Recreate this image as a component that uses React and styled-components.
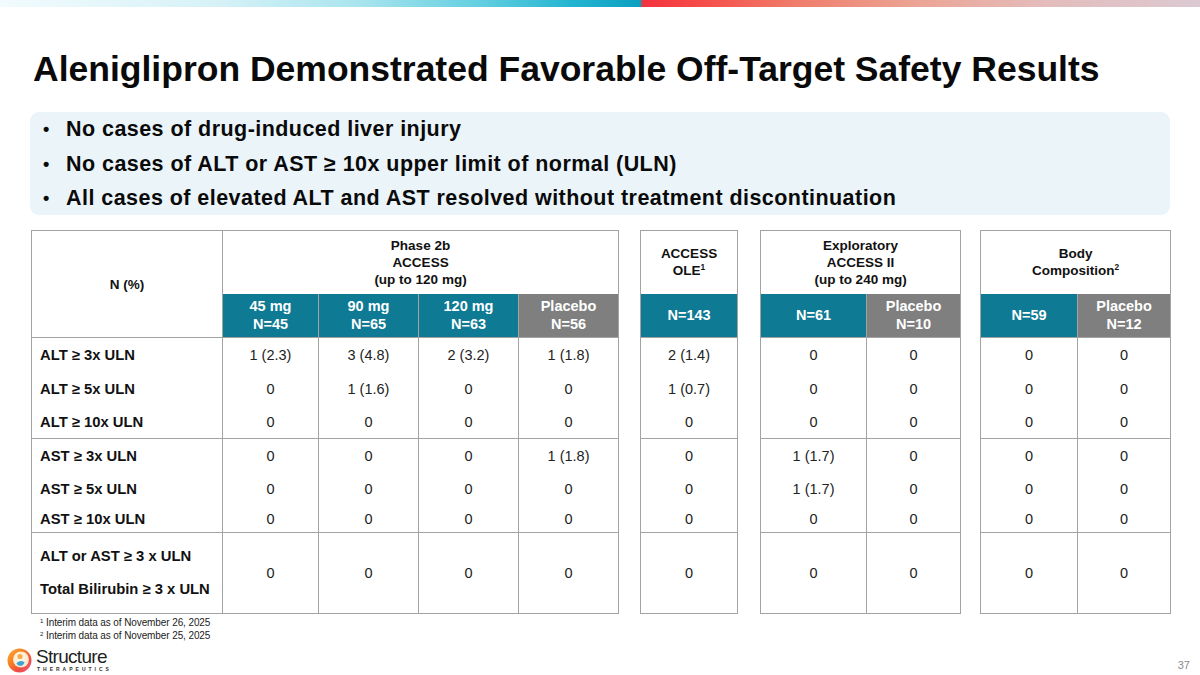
import React from 'react';
import styled, {createGlobalStyle} from 'styled-components';

const GlobalStyle = createGlobalStyle`
  html, body {
    margin: 0;
    padding: 0;
    background: #ffffff;
  }
  body {
    font-family: "Liberation Sans", Arial, sans-serif;
    color: #111111;
  }
`;

const TEAL = '#0e7a93';
const GRAY = '#7f7f7f';
const LINE = '#a3a3a3';

const labels = [
    ['ALT ≥ 3x ULN', 'ALT ≥ 5x ULN', 'ALT ≥ 10x ULN'],
    ['AST ≥ 3x ULN', 'AST ≥ 5x ULN', 'AST ≥ 10x ULN'],
    [null],
];

const rowHeights = [[34, 34, 33], [34, 33, 27], [81]];

const phase2b = [
    [['1 (2.3)', '3 (4.8)', '2 (3.2)', '1 (1.8)'], ['0', '1 (1.6)', '0', '0'], ['0', '0', '0', '0']],
    [['0', '0', '0', '1 (1.8)'], ['0', '0', '0', '0'], ['0', '0', '0', '0']],
    [['0', '0', '0', '0']],
];

const ole = [
    [['2 (1.4)'], ['1 (0.7)'], ['0']],
    [['0'], ['0'], ['0']],
    [['0']],
];

const exploratory = [
    [['0', '0'], ['0', '0'], ['0', '0']],
    [['1 (1.7)', '0'], ['1 (1.7)', '0'], ['0', '0']],
    [['0', '0']],
];

const bodyComp = [
    [['0', '0'], ['0', '0'], ['0', '0']],
    [['0', '0'], ['0', '0'], ['0', '0']],
    [['0', '0']],
];

const LogoMark = () => (
    <svg width="25" height="25" viewBox="0 0 25 25">
        <defs>
            <linearGradient id="ring" x1="0" y1="0" x2="1" y2="1">
                <stop offset="0" stopColor="#fbb040"/>
                <stop offset="0.35" stopColor="#f7821f"/>
                <stop offset="0.7" stopColor="#ef4a45"/>
                <stop offset="1" stopColor="#ec6d9c"/>
            </linearGradient>
            <radialGradient id="core" cx="0.45" cy="0.4" r="0.6">
                <stop offset="0" stopColor="#fffbea"/>
                <stop offset="1" stopColor="#fde3c4"/>
            </radialGradient>
        </defs>
        <circle cx="12.5" cy="12.5" r="12" fill="url(#ring)"/>
        <circle cx="14" cy="11.5" r="8" fill="url(#core)"/>
        <circle cx="13" cy="8.5" r="2.6" fill="#f9a94b"/>
        <path d="M9.5 15.5 C11 12.5 15.5 12.2 17.5 14.5 C16 18.5 11.5 19 9.5 15.5 Z" fill="#3ba4d6"/>
    </svg>
);

const Sup = ({children}) => <SupText>{children}</SupText>;

const BodyRows = ({data, withLabels}) => (
    <>
        {data.map((group, gi) => (
            <Group key={gi}>
                {group.map((values, ri) => (
                    <BodyRow key={ri} $h={rowHeights[gi][ri]}>
                        {withLabels && (
                            <LabelCell>
                                {gi === 2 ? (
                                    <>
                                        <LabelLine>ALT or AST ≥ 3 x ULN</LabelLine>
                                        <LabelLine>Total Bilirubin ≥ 3 x ULN</LabelLine>
                                    </>
                                ) : labels[gi][ri]}
                            </LabelCell>
                        )}
                        {values.map((v, ci) => (
                            <ValueCell key={ci}>{v}</ValueCell>
                        ))}
                    </BodyRow>
                ))}
            </Group>
        ))}
    </>
);

const App = () => {
    return (
        <Page>
            <GlobalStyle/>
            <TopBar/>
            <Title>Aleniglipron Demonstrated Favorable Off-Target Safety Results</Title>

            <Callout>
                <Bullet>No cases of drug-induced liver injury</Bullet>
                <Bullet>No cases of ALT or AST ≥ 10x upper limit of normal (ULN)</Bullet>
                <Bullet>All cases of elevated ALT and AST resolved without treatment discontinuation</Bullet>
            </Callout>

            <Tables>
                <Table $w={587}>
                    <colgroup>
                        <col style={{width: 191}}/>
                        <col style={{width: 96}}/>
                        <col style={{width: 100}}/>
                        <col style={{width: 100}}/>
                        <col style={{width: 100}}/>
                    </colgroup>
                    <thead>
                        <HeadRow $h={63}>
                            <HeadCell rowSpan={2}>N (%)</HeadCell>
                            <HeadCell colSpan={4}>Phase 2b<br/>ACCESS<br/>(up to 120 mg)</HeadCell>
                        </HeadRow>
                        <HeadRow $h={44}>
                            <ArmCell $bg={TEAL}>45 mg<br/>N=45</ArmCell>
                            <ArmCell $bg={TEAL}>90 mg<br/>N=65</ArmCell>
                            <ArmCell $bg={TEAL}>120 mg<br/>N=63</ArmCell>
                            <ArmCell $bg={GRAY}>Placebo<br/>N=56</ArmCell>
                        </HeadRow>
                    </thead>
                    <BodyRows data={phase2b} withLabels/>
                </Table>

                <Table $w={98}>
                    <thead>
                        <HeadRow $h={63}>
                            <HeadCell>ACCESS<br/>OLE<Sup>1</Sup></HeadCell>
                        </HeadRow>
                        <HeadRow $h={44}>
                            <ArmCell $bg={TEAL}>N=143</ArmCell>
                        </HeadRow>
                    </thead>
                    <BodyRows data={ole}/>
                </Table>

                <Table $w={200}>
                    <colgroup>
                        <col style={{width: 106}}/>
                        <col style={{width: 94}}/>
                    </colgroup>
                    <thead>
                        <HeadRow $h={63}>
                            <HeadCell colSpan={2}>Exploratory<br/>ACCESS II<br/>(up to 240 mg)</HeadCell>
                        </HeadRow>
                        <HeadRow $h={44}>
                            <ArmCell $bg={TEAL}>N=61</ArmCell>
                            <ArmCell $bg={GRAY}>Placebo<br/>N=10</ArmCell>
                        </HeadRow>
                    </thead>
                    <BodyRows data={exploratory}/>
                </Table>

                <Table $w={190}>
                    <colgroup>
                        <col style={{width: 97}}/>
                        <col style={{width: 93}}/>
                    </colgroup>
                    <thead>
                        <HeadRow $h={63}>
                            <HeadCell colSpan={2}>Body<br/>Composition<Sup>2</Sup></HeadCell>
                        </HeadRow>
                        <HeadRow $h={44}>
                            <ArmCell $bg={TEAL}>N=59</ArmCell>
                            <ArmCell $bg={GRAY}>Placebo<br/>N=12</ArmCell>
                        </HeadRow>
                    </thead>
                    <BodyRows data={bodyComp}/>
                </Table>
            </Tables>

            <Footnotes>
                <Footnote><Sup>1</Sup> Interim data as of November 26, 2025</Footnote>
                <Footnote><Sup>2</Sup> Interim data as of November 25, 2025</Footnote>
            </Footnotes>

            <Footer>
                <Logo>
                    <LogoMark/>
                    <LogoWords>
                        <LogoName>Structure</LogoName>
                        <LogoTag>THERAPEUTICS</LogoTag>
                    </LogoWords>
                </Logo>
                <PageNumber>37</PageNumber>
            </Footer>
        </Page>
    );
};

const Page = styled.div`
  width: 1200px;
  height: 675px;
  overflow: hidden;
  display: flex;
  flex-direction: column;
  background: #ffffff;
`;

const TopBar = styled.div`
  height: 7px;
  flex-shrink: 0;
  background: linear-gradient(
    to right,
    #f2fbfd 0%,
    #d6f2f7 18%,
    #a9e4ee 30%,
    #62cfe0 40%,
    #21b3cf 48%,
    #0d9fc0 53.3%,
    #f4323f 53.6%,
    #f64a47 58%,
    #f07b6a 66%,
    #eca393 76%,
    #e4bcbb 87%,
    #dcc9d3 100%
  );
`;

const Title = styled.h1`
  margin: 42px 0 0 33px;
  font-size: 35.5px;
  line-height: 40px;
  font-weight: 700;
  color: #0a0a0a;
  letter-spacing: 0;
  white-space: nowrap;
`;

const Callout = styled.ul`
  list-style: none;
  margin: 23px 30px 0 30px;
  padding: 0 0 0 13px;
  height: 103px;
  background: #eaf4f9;
  border-radius: 9px;
`;

const Bullet = styled.li`
  display: flex;
  font-size: 21.5px;
  line-height: 34.5px;
  font-weight: 700;
  color: #0a0a0a;
  letter-spacing: 0.45px;
  white-space: nowrap;

  &::before {
    content: '•';
    width: 23px;
    flex-shrink: 0;
    font-size: 18px;
  }
`;

const Tables = styled.div`
  display: flex;
  align-items: flex-start;
  gap: 21px;
  margin: 15px 0 0 31px;

  & > table:nth-child(3) {
    margin-left: 1px;
  }

  & > table:last-child {
    margin-left: -2px;
  }
`;

const Table = styled.table`
  width: ${(p) => p.$w}px;
  table-layout: fixed;
  border-collapse: collapse;
  border: 1px solid ${LINE};
  flex-shrink: 0;
`;

const HeadRow = styled.tr`
  height: ${(p) => p.$h}px;
`;

const HeadCell = styled.th`
  padding: 0 2px;
  font-size: 13.5px;
  line-height: 17px;
  font-weight: 700;
  color: #111111;
  text-align: center;
  vertical-align: middle;
  border-left: 1px solid ${LINE};
  border-right: 1px solid ${LINE};
`;

const ArmCell = styled.th`
  padding: 0 2px;
  background: ${(p) => p.$bg};
  color: #ffffff;
  font-size: 14.5px;
  line-height: 18px;
  font-weight: 700;
  text-align: center;
  vertical-align: middle;
  border-left: 1px solid ${LINE};
  border-right: 1px solid ${LINE};
`;

const Group = styled.tbody`
  border-top: 1px solid ${LINE};
`;

const BodyRow = styled.tr`
  height: ${(p) => p.$h}px;
`;

const LabelCell = styled.td`
  padding: 0 0 0 8px;
  font-size: 14.8px;
  font-weight: 700;
  color: #111111;
  text-align: left;
  vertical-align: middle;
  border-left: 1px solid ${LINE};
  border-right: 1px solid ${LINE};
  white-space: nowrap;
`;

const LabelLine = styled.div`
  line-height: 33px;
`;

const ValueCell = styled.td`
  padding: 0;
  font-size: 14.5px;
  color: #222222;
  text-align: center;
  vertical-align: middle;
  border-left: 1px solid ${LINE};
  border-right: 1px solid ${LINE};
`;

const SupText = styled.sup`
  font-size: 0.62em;
  line-height: 0;
  vertical-align: 0.55em;
`;

const Footnotes = styled.div`
  margin: 2px 0 0 40px;
`;

const Footnote = styled.div`
  font-size: 10px;
  line-height: 13px;
  color: #222222;
  letter-spacing: -0.1px;
`;

const Footer = styled.div`
  display: flex;
  justify-content: space-between;
  align-items: flex-end;
  margin-top: 5px;
  padding: 0 10px 0 7px;
`;

const Logo = styled.div`
  display: flex;
  align-items: center;
  gap: 4px;
`;

const LogoWords = styled.div`
  display: flex;
  flex-direction: column;
`;

const LogoName = styled.span`
  font-family: "Liberation Sans", Arial, sans-serif;
  font-size: 19px;
  line-height: 19px;
  letter-spacing: -0.7px;
  color: #1f1f1f;
`;

const LogoTag = styled.span`
  font-size: 5px;
  line-height: 7px;
  font-weight: 700;
  letter-spacing: 3px;
  color: #333333;
  margin-left: 1px;
`;

const PageNumber = styled.span`
  font-size: 11px;
  color: #8a8a8a;
  margin-bottom: 2px;
`;

export default App;
